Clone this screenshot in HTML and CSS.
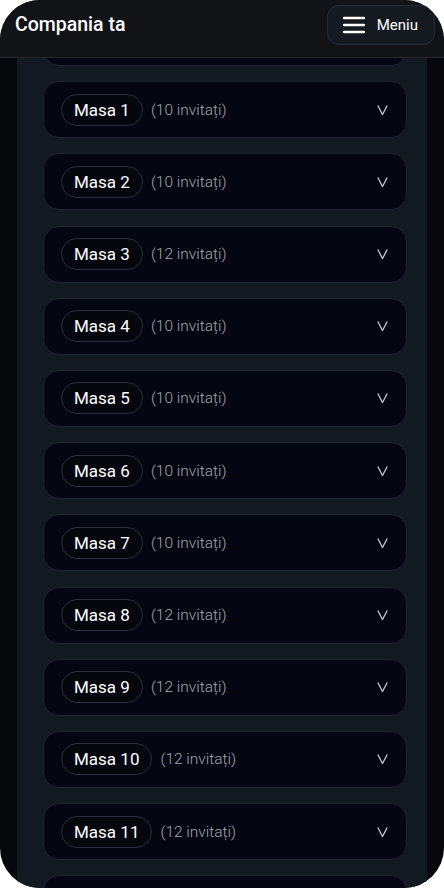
FILE: index.html
```html
<!DOCTYPE html>
<html lang="ro">
<head>
    <meta charset="UTF-8">
    <meta name="viewport" content="width=device-width, initial-scale=1">
    <title>Compania ta | Mese</title>
    <link rel="stylesheet" href="styles.css">
</head>
<body>
    <div class="phone">
        <header class="topbar">
            <h1>Compania ta</h1>
            <button class="menu-btn">
                <svg width="22" height="18" viewBox="0 0 22 18">
                    <path d="M1 2h20M1 9h20M1 16h20" stroke="#fff" stroke-width="2.4" stroke-linecap="round"/>
                </svg>
                <span>Meniu</span>
            </button>
        </header>

        <div class="screen">
            <div class="panel">
                <div class="tables">
                    <div class="table-card"></div>
                    <div class="table-card"><span class="pill">Masa 1</span><span class="count">(10 invitați)</span><span class="chev"><svg width="11" height="10" viewBox="0 0 11 10"><path d="M0.8 0.5 5.5 9.5 10.2 0.5" fill="none" stroke="#c3c7cf" stroke-width="1.3"/></svg></span></div>
                    <div class="table-card"><span class="pill">Masa 2</span><span class="count">(10 invitați)</span><span class="chev"><svg width="11" height="10" viewBox="0 0 11 10"><path d="M0.8 0.5 5.5 9.5 10.2 0.5" fill="none" stroke="#c3c7cf" stroke-width="1.3"/></svg></span></div>
                    <div class="table-card"><span class="pill">Masa 3</span><span class="count">(12 invitați)</span><span class="chev"><svg width="11" height="10" viewBox="0 0 11 10"><path d="M0.8 0.5 5.5 9.5 10.2 0.5" fill="none" stroke="#c3c7cf" stroke-width="1.3"/></svg></span></div>
                    <div class="table-card"><span class="pill">Masa 4</span><span class="count">(10 invitați)</span><span class="chev"><svg width="11" height="10" viewBox="0 0 11 10"><path d="M0.8 0.5 5.5 9.5 10.2 0.5" fill="none" stroke="#c3c7cf" stroke-width="1.3"/></svg></span></div>
                    <div class="table-card"><span class="pill">Masa 5</span><span class="count">(10 invitați)</span><span class="chev"><svg width="11" height="10" viewBox="0 0 11 10"><path d="M0.8 0.5 5.5 9.5 10.2 0.5" fill="none" stroke="#c3c7cf" stroke-width="1.3"/></svg></span></div>
                    <div class="table-card"><span class="pill">Masa 6</span><span class="count">(10 invitați)</span><span class="chev"><svg width="11" height="10" viewBox="0 0 11 10"><path d="M0.8 0.5 5.5 9.5 10.2 0.5" fill="none" stroke="#c3c7cf" stroke-width="1.3"/></svg></span></div>
                    <div class="table-card"><span class="pill">Masa 7</span><span class="count">(10 invitați)</span><span class="chev"><svg width="11" height="10" viewBox="0 0 11 10"><path d="M0.8 0.5 5.5 9.5 10.2 0.5" fill="none" stroke="#c3c7cf" stroke-width="1.3"/></svg></span></div>
                    <div class="table-card"><span class="pill">Masa 8</span><span class="count">(12 invitați)</span><span class="chev"><svg width="11" height="10" viewBox="0 0 11 10"><path d="M0.8 0.5 5.5 9.5 10.2 0.5" fill="none" stroke="#c3c7cf" stroke-width="1.3"/></svg></span></div>
                    <div class="table-card"><span class="pill">Masa 9</span><span class="count">(12 invitați)</span><span class="chev"><svg width="11" height="10" viewBox="0 0 11 10"><path d="M0.8 0.5 5.5 9.5 10.2 0.5" fill="none" stroke="#c3c7cf" stroke-width="1.3"/></svg></span></div>
                    <div class="table-card"><span class="pill">Masa 10</span><span class="count">(12 invitați)</span><span class="chev"><svg width="11" height="10" viewBox="0 0 11 10"><path d="M0.8 0.5 5.5 9.5 10.2 0.5" fill="none" stroke="#c3c7cf" stroke-width="1.3"/></svg></span></div>
                    <div class="table-card"><span class="pill">Masa 11</span><span class="count">(12 invitați)</span><span class="chev"><svg width="11" height="10" viewBox="0 0 11 10"><path d="M0.8 0.5 5.5 9.5 10.2 0.5" fill="none" stroke="#c3c7cf" stroke-width="1.3"/></svg></span></div>
                    <div class="table-card"></div>
                </div>
            </div>
        </div>
    </div>
</body>
</html>
```

FILE: styles.css
```css
body {
    margin: 0;
    background: #fff;
    font-family: Roboto, "Liberation Sans", sans-serif;
    color: #fff;
}

.phone {
    width: 444px;
    height: 888px;
    border-radius: 40px;
    overflow: hidden;
    background: #07080b;
    display: flex;
    flex-direction: column;
}

.topbar {
    height: 58px;
    flex-shrink: 0;
    box-sizing: border-box;
    display: flex;
    align-items: center;
    justify-content: space-between;
    padding: 0 9px 8px 15px;
    background: #111317;
    border-bottom: 1px solid #22272f;
}

.topbar h1 {
    margin: 0;
    font-size: 19.5px;
    font-weight: 500;
}

.menu-btn {
    display: flex;
    align-items: center;
    gap: 12px;
    height: 40px;
    padding: 0 16px 0 15px;
    background: #151a21;
    border: 1px solid #262c36;
    border-radius: 12px;
    color: #fff;
    font-family: inherit;
    font-size: 15px;
}

.screen {
    flex: 1;
    overflow: hidden;
    padding: 0 17px;
}

.panel {
    height: 100%;
    overflow: hidden;
    background: #131920;
    padding: 0 20px 0 26px;
}

.tables {
    display: flex;
    flex-direction: column;
    gap: 15.2px;
    margin-top: -49px;
}

.table-card {
    height: 57px;
    flex-shrink: 0;
    box-sizing: border-box;
    display: flex;
    align-items: center;
    padding: 0 18px 0 17px;
    background: #040611;
    border: 1px solid #1d2430;
    border-radius: 16px;
}

.pill {
    padding: 5px 12px;
    font-size: 17px;
    line-height: 20px;
    border: 1px solid #29303c;
    border-radius: 20px;
    background: #05070f;
}

.count {
    margin-left: 8px;
    font-size: 15.5px;
    font-weight: 300;
    color: #a2a7b0;
}

.chev {
    margin-left: auto;
    display: flex;
}
```
